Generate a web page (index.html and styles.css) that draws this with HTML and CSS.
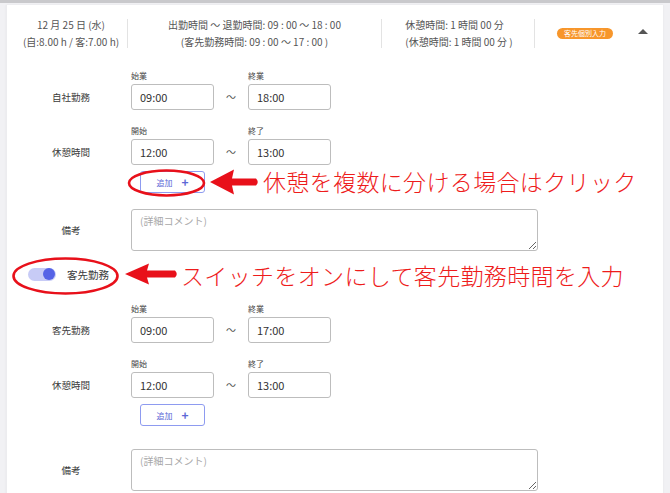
FILE: index.html
```html
<!DOCTYPE html>
<html lang="ja">
<head>
<meta charset="utf-8">
<link rel="stylesheet" href="styles.css">
</head>
<body>
<div class="topbar"></div>
<div class="card">
  <div class="header">
    <div class="hcol c1">
      <div>12 月 25 日 (水)</div>
      <div>(自:8.00 h / 客:7.00 h)</div>
    </div>
    <div class="hcol c2">
      <div>出勤時間 〜 退勤時間: 09 : 00 〜 18 : 00</div>
      <div>(客先勤務時間: 09 : 00 〜 17 : 00 )</div>
    </div>
    <div class="hcol c3">
      <div class="c3in">
        <div>休憩時間: 1 時間 00 分</div>
        <div>(休憩時間: 1 時間 00 分 )</div>
      </div>
    </div>
    <div class="hcol c4">
      <span class="badge">客先個別入力</span>
      <span class="caret"></span>
    </div>
  </div>

  <div class="form">
    <div class="row">
      <div class="label">自社勤務</div>
      <div class="fields">
        <div class="field"><div class="small">始業</div><div class="input">09:00</div></div>
        <div class="tilde">〜</div>
        <div class="field"><div class="small">終業</div><div class="input">18:00</div></div>
      </div>
    </div>
    <div class="row r2">
      <div class="label">休憩時間</div>
      <div class="fields">
        <div class="field"><div class="small">開始</div><div class="input">12:00</div></div>
        <div class="tilde">〜</div>
        <div class="field"><div class="small">終了</div><div class="input">13:00</div></div>
      </div>
    </div>
    <div class="addrow"><button class="add">追加<span class="plus">+</span></button></div>
    <div class="row memo">
      <div class="label tall">備考</div>
      <textarea class="textarea" placeholder="(詳細コメント)"></textarea>
    </div>

    <div class="toggle-row">
      <span class="track"><span class="knob"></span></span>
      <span class="tlabel">客先勤務</span>
    </div>

    <div class="row b2">
      <div class="label">客先勤務</div>
      <div class="fields">
        <div class="field"><div class="small">始業</div><div class="input">09:00</div></div>
        <div class="tilde">〜</div>
        <div class="field"><div class="small">終業</div><div class="input">17:00</div></div>
      </div>
    </div>
    <div class="row r2">
      <div class="label">休憩時間</div>
      <div class="fields">
        <div class="field"><div class="small">開始</div><div class="input">12:00</div></div>
        <div class="tilde">〜</div>
        <div class="field"><div class="small">終了</div><div class="input">13:00</div></div>
      </div>
    </div>
    <div class="addrow"><button class="add">追加<span class="plus">+</span></button></div>
    <div class="row memo memo2">
      <div class="label tall">備考</div>
      <textarea class="textarea" placeholder="(詳細コメント)"></textarea>
    </div>
  </div>
</div>

<svg class="overlay" width="670" height="493" viewBox="0 0 670 493">
  <ellipse cx="166.5" cy="183" rx="37.5" ry="12.5" fill="none" stroke="#e8101a" stroke-width="2.6"/>
  <path d="M210,182 L234,169.5 L232,178.5 L256,178.5 Q259.5,182 256,185.5 L232,185.5 L234,194.5 Z" fill="#e8101a"/>
  <ellipse cx="65.5" cy="276" rx="52" ry="17.5" fill="none" stroke="#e8101a" stroke-width="2.6"/>
  <path d="M125,274 L149,263.5 L147,270.5 L175,270.5 Q178.5,274 175,277.5 L147,277.5 L149,284.5 Z" fill="#e8101a"/>
</svg>
<div class="note n1">休憩を複数に分ける場合はクリック</div>
<div class="note n2">スイッチをオンにして客先勤務時間を入力</div>
</body>
</html>
```

FILE: styles.css
```css
* { box-sizing: border-box; }
html, body {
  margin: 0;
  padding: 0;
}
body {
  width: 670px;
  height: 493px;
  overflow: hidden;
  background: #f1f1f4;
  font-family: "Noto Sans CJK JP", "Noto Sans", sans-serif;
  color: #444;
  position: relative;
}
.topbar {
  height: 3px;
  background: #c9c9cc;
}
.card {
  margin: 2px 7px 0 6px;
  width: 657px;
  height: 500px;
  background: #fff;
  border-left: 1px solid #ececef;
  box-shadow: 0 0 2px rgba(0,0,0,0.06);
}
.header {
  display: flex;
  align-items: center;
  height: 56px;
  font-size: 10px;
  line-height: 17px;
  color: #555;
}
.hcol {
  height: 29px;
  display: flex;
  flex-direction: column;
  justify-content: center;
  text-align: center;
}
.c1 { width: 120px; padding-left: 8px; }
.c2 { width: 254px; border-left: 1px solid #e3e3e3; }
.c3 { width: 153px; border-left: 1px solid #e3e3e3; align-items: center; }
.c3in { text-align: left; padding-left: 2px; }
.c4 {
  flex: 1;
  border-left: 1px solid #e3e3e3;
  flex-direction: row;
  align-items: center;
  justify-content: flex-start;
}
.badge {
  margin-left: 22px;
  width: 56px;
  height: 11px;
  border-radius: 6px;
  background: #f7962b;
  color: #fff;
  font-size: 7px;
  line-height: 11px;
  text-align: center;
}
.caret {
  margin-left: 25px;
  margin-bottom: 4px;
  width: 0;
  height: 0;
  border-left: 5px solid transparent;
  border-right: 5px solid transparent;
  border-bottom: 5px solid #555;
}
.form {
  padding-top: 9px;
}
.row {
  display: flex;
  align-items: flex-end;
}
.r2 { margin-top: 15px; }
.b2 { margin-top: 22px; }
.label {
  width: 124px;
  height: 26px;
  padding-left: 4px;
  display: flex;
  align-items: center;
  justify-content: center;
  font-size: 9.5px;
  color: #3a3a3a;
}
.label.tall { height: 42px; }
.fields {
  display: flex;
  align-items: flex-end;
}
.small {
  font-size: 8px;
  line-height: 12px;
  height: 12px;
  margin-bottom: 2px;
  color: #444;
}
.input {
  width: 83px;
  height: 26px;
  border: 1px solid #bdbdbd;
  border-radius: 3px;
  padding-left: 8px;
  font-size: 11px;
  line-height: 24px;
  color: #333;
}
.tilde {
  width: 34px;
  height: 26px;
  line-height: 26px;
  text-align: center;
  font-size: 10px;
  color: #555;
}
.addrow {
  padding-left: 133px;
  margin-top: 6px;
}
.add {
  display: flex;
  align-items: center;
  justify-content: center;
  width: 65px;
  height: 22px;
  padding: 0;
  background: #fff;
  border: 1px solid #8e9bf0;
  border-radius: 3px;
  font-family: "Noto Sans CJK JP", sans-serif;
  font-size: 8px;
  color: #5c68d6;
}
.plus {
  margin-left: 9px;
  font-size: 12px;
  font-weight: bold;
  line-height: 12px;
}
.memo { margin-top: 16px; }
.memo2 { margin-top: 23px; }
.textarea {
  display: block;
  width: 407px;
  height: 42px;
  margin: 0;
  border: 1px solid #bdbdbd;
  border-radius: 3px;
  padding: 3px 8px;
  font-family: "Noto Sans CJK JP", sans-serif;
  font-size: 10px;
  line-height: 16px;
  color: #333;
  background: #fff;
  resize: vertical;
  outline: none;
}
.textarea::placeholder {
  color: #a8a8a8;
}
.toggle-row {
  display: flex;
  align-items: center;
  margin-top: 16px;
  padding-left: 21px;
  height: 14px;
}
.track {
  position: relative;
  width: 28px;
  height: 13px;
  border-radius: 7px;
  background: #c7cbf6;
}
.knob {
  position: absolute;
  top: 0.5px;
  left: 15px;
  width: 12px;
  height: 12px;
  border-radius: 50%;
  background: #5563e6;
}
.tlabel {
  margin-left: 11px;
  font-size: 10.5px;
  color: #3a3a3a;
}
.overlay {
  position: absolute;
  left: 0;
  top: 0;
}
.note {
  position: absolute;
  font-size: 23px;
  font-weight: 300;
  letter-spacing: 0.35px;
  line-height: 28px;
  color: #ee1c1c;
  white-space: nowrap;
}
.n1 { left: 263px; top: 167px; }
.n2 { left: 181px; top: 261px; }
```
